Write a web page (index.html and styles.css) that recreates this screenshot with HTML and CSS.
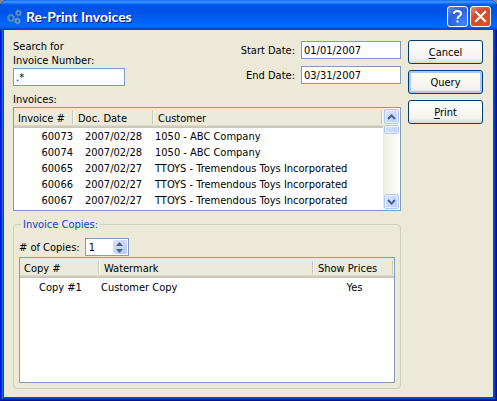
FILE: index.html
```html
<!DOCTYPE html>
<html lang="en">
<head>
<meta charset="utf-8">
<title>Re-Print Invoices</title>
<link rel="stylesheet" href="styles.css">
</head>
<body>
<div class="window">
  <header class="titlebar">
    <svg class="app-icon" viewBox="0 0 16 16" width="16" height="16" fill="none" aria-hidden="true">
      <circle cx="4" cy="9" r="2.700" stroke="#4f8fb8" stroke-width="1.600"/>
      <circle cx="4" cy="9" r="3.800" stroke="#4f8fb8" stroke-width="1" stroke-dasharray="1.500 1.484"/>
      <circle cx="11.500" cy="4" r="2" stroke="#5f97bd" stroke-width="1.500"/>
      <circle cx="11.500" cy="4" r="3" stroke="#5f97bd" stroke-width="1" stroke-dasharray="1.200 1.156"/>
      <circle cx="10.500" cy="12" r="1.900" stroke="#6c9cc4" stroke-width="1.500"/>
      <circle cx="10.500" cy="12" r="3" stroke="#6c9cc4" stroke-width="1" stroke-dasharray="1.200 1.156"/>
    </svg>
    <h1>Re-Print Invoices</h1>
    <button class="caption help" type="button" aria-label="Help">
      <svg viewBox="0 0 21 21" width="21" height="21" fill="none" aria-hidden="true">
        <path d="M7 8V7.500C7 5.500 8.500 5 10.500 5S14 5.800 14 7.700C14 10 10.500 10 10.500 13" stroke="#fff" stroke-width="2"/>
        <path d="M9.500 14.500h2v2h-2z" fill="#fff"/>
      </svg>
    </button>
    <button class="caption close" type="button" aria-label="Close">
      <svg viewBox="0 0 21 21" width="21" height="21" aria-hidden="true"><path d="M6 6l9 9M15 6l-9 9" stroke="#fff" stroke-width="2.200" stroke-linecap="square"/></svg>
    </button>
  </header>
  <main class="content">
    <div class="main-column">
      <div class="filters">
        <div class="search">
          <label for="search">Search for<br>Invoice Number:</label>
          <input id="search" class="field" type="text" value=".*">
        </div>
        <div class="dates">
          <label for="start">Start Date:</label>
          <input id="start" class="field" type="text" value="01/01/2007">
          <label for="end">End Date:</label>
          <input id="end" class="field" type="text" value="03/31/2007">
        </div>
      </div>
      <h2 id="invoices-label" class="list-label">Invoices:</h2>
      <div class="list invoice-list">
        <table class="grid invoices" aria-labelledby="invoices-label">
          <colgroup><col class="c-number"><col class="c-date"><col></colgroup>
          <thead><tr><th>Invoice #</th><th>Doc. Date</th><th>Customer</th></tr></thead>
          <tbody>
            <tr><td>60073</td><td>2007/02/28</td><td>1050 - ABC Company</td></tr>
            <tr><td>60074</td><td>2007/02/28</td><td>1050 - ABC Company</td></tr>
            <tr><td>60065</td><td>2007/02/27</td><td>TTOYS - Tremendous Toys Incorporated</td></tr>
            <tr><td>60066</td><td>2007/02/27</td><td>TTOYS - Tremendous Toys Incorporated</td></tr>
            <tr><td>60067</td><td>2007/02/27</td><td>TTOYS - Tremendous Toys Incorporated</td></tr>
          </tbody>
        </table>
        <div class="scrollbar">
          <button class="scroll-button" type="button" aria-label="Scroll up"><svg viewBox="0 0 9 6" width="9" height="6" fill="none" aria-hidden="true"><path d="M1 5l3.500-3.500L8 5" stroke="#4d6185" stroke-width="2"/></svg></button>
          <div class="thumb"></div>
          <button class="scroll-button down" type="button" aria-label="Scroll down"><svg viewBox="0 0 9 6" width="9" height="6" fill="none" aria-hidden="true"><path d="M1 1l3.500 3.500L8 1" stroke="#4d6185" stroke-width="2"/></svg></button>
        </div>
      </div>
      <fieldset class="copies">
        <legend>Invoice Copies:</legend>
        <div class="copy-count">
          <label for="copies"># of Copies:</label>
          <div class="spinner">
            <input id="copies" type="text" inputmode="numeric" value="1">
            <div class="steps">
              <button type="button" aria-label="More copies"><svg viewBox="0 0 7 4" width="7" height="4" aria-hidden="true"><path d="M0 4l3.500-4L7 4z" fill="#4d6185"/></svg></button>
              <button type="button" aria-label="Fewer copies"><svg viewBox="0 0 7 4" width="7" height="4" aria-hidden="true"><path d="M0 0l3.500 4L7 0z" fill="#4d6185"/></svg></button>
            </div>
          </div>
        </div>
        <div class="list copy-list">
          <table class="grid copy-grid">
            <colgroup><col class="c-copy"><col><col class="c-prices"></colgroup>
            <thead><tr><th>Copy #</th><th>Watermark</th><th>Show Prices</th></tr></thead>
            <tbody><tr><td>Copy #1</td><td>Customer Copy</td><td>Yes</td></tr></tbody>
          </table>
        </div>
      </fieldset>
    </div>
    <div class="actions">
      <button class="action" type="button"><u>C</u>ancel</button>
      <button class="action default" type="button">Query</button>
      <button class="action" type="button"><u>P</u>rint</button>
    </div>
  </main>
</div>
</body>
</html>
```
FILE: styles.css
```css
* { box-sizing: border-box; }

body {
  margin: 0;
  background: #8f8b7c;
  color: #000;
  font: 11px/15px Tahoma, "DejaVu Sans Condensed", "Noto Sans", sans-serif;
}

button, input { font: inherit; color: inherit; margin: 0; padding: 0; }
svg { display: block; }

.window {
  display: flex;
  flex-direction: column;
  min-height: 100vh;
  padding: 0 4px 4px;
  border-radius: 7px 7px 0 0;
  background: #0441dc;
  box-shadow: inset 1px 0 #0019cf, inset -1px -1px #00138c, inset 2px 0 #0831d9, inset -2px -2px #001ea0, inset 3px 0 #166aee;
}

.titlebar {
  display: flex;
  align-items: center;
  gap: 2px;
  height: 30px;
  margin: 0 -4px;
  padding: 3px 6px 0 7px;
  border-radius: 7px 7px 0 0;
  background: linear-gradient(#0058e6 0, #3a93ff 1px, #2a88ff 3px, #0464f0 4px, #0053e6 6px, #0055e8 14px, #0066ff 23px, #0066ff 27px, #0050ee 28px, #003dd7 30px);
}

.titlebar h1 {
  flex: 1;
  margin: 0 0 0 1px;
  color: #fff;
  font: bold 14px/18px "Trebuchet MS", Lato, "Open Sans", sans-serif;
  text-shadow: 1px 1px #0a1883;
}

.caption {
  width: 21px;
  height: 21px;
  border: 1px solid #fff;
  border-radius: 3px;
}
.caption svg { margin: -1px; }
.help { background: radial-gradient(circle at 80% 85%, #3f84ff, #2d5fdc 60%, #6d90ee); }
.close { background: radial-gradient(circle at 75% 80%, #e0501e, #d4492a 60%, #ea9480); }

.content {
  display: flex;
  flex: 1;
  gap: 7px;
  padding: 10px 10px 8px 9px;
  background: #ece9d8;
}

.main-column { display: flex; flex: 1; flex-direction: column; min-width: 0; }
.filters { display: flex; justify-content: space-between; }
.search { display: grid; gap: 0; width: 112px; }
.search label { height: 28px; line-height: 14px; }
.dates {
  display: grid;
  grid-template-columns: auto 100px;
  align-content: start;
  align-items: center;
  gap: 7px 6px;
  padding-top: 1px;
  text-align: right;
}

.field {
  width: 100%;
  height: 18px;
  padding: 0 2px;
  border: 1px solid #7f9db9;
  background: #fff;
}

.list-label { margin: 7px 0 0; font: inherit; line-height: 14px; }

.list {
  display: flex;
  align-items: stretch;
  border: 1px solid #7f9db9;
  background: #fff;
}

.grid {
  flex: 1;
  align-self: flex-start;
  min-width: 0;
  table-layout: fixed;
  border-collapse: collapse;
}
.grid th, .grid td { padding: 0; font-weight: normal; white-space: nowrap; }
.grid th {
  height: 20px;
  padding-left: 4px;
  text-align: left;
  background:
    linear-gradient(#c7c5b2, #c7c5b2) right 1px top 3px / 1px 13px no-repeat,
    linear-gradient(#fff, #fff) right 0 top 3px / 1px 13px no-repeat,
    linear-gradient(#ebeadb 17px, #e2decd 17px, #d6d2c2 18px, #cbc7b8 19px);
}
.grid td { height: 16px; }

.invoices { margin-bottom: 2px; }
.invoices tbody td { padding-left: 1px; }
.invoices td:nth-child(1) { padding-right: 1px; text-align: right; }
.invoices td:nth-child(2) { padding-right: 12px; text-align: right; }
.c-number { width: 60px; }
.c-date { width: 80px; }

.scrollbar {
  display: flex;
  flex-direction: column;
  width: 17px;
  padding: 1px;
  background: linear-gradient(90deg, #eeede5, #fefefb);
}
.scroll-button, .thumb {
  border: 1px solid #b4c8f6;
  border-radius: 2px;
  background: linear-gradient(135deg, #dce6ff, #b9cdfb);
  box-shadow: inset 0 0 0 1px #e8efff;
}
.scroll-button { display: grid; place-items: center; height: 15px; }
.thumb { height: 9px; margin-top: 1px; }
.down { margin-top: auto; }

.copies {
  display: flex;
  flex: 1;
  flex-direction: column;
  min-width: 0;
  margin: 6px 0 0;
  padding: 6px 5px 5px;
  border: 1px solid #d0d0bf;
  border-radius: 4px;
}
.copies legend { margin-left: 2px; padding: 0 2px; color: #0046d5; }
.copy-count { display: flex; align-items: center; gap: 5px; }
.spinner {
  display: flex;
  width: 44px;
  height: 18px;
  padding: 1px;
  border: 1px solid #7f9db9;
  background: #fff;
}
.spinner input { flex: 1; min-width: 0; padding-left: 2px; border: 0; background: none; }
.steps {
  display: flex;
  flex-direction: column;
  width: 14px;
  border-radius: 2px;
  background: linear-gradient(135deg, #d5e1ff, #b5c9f9);
}
.steps button { display: grid; flex: 1; place-items: center; border: 0; background: none; }

.copy-list { flex: 1; margin-top: 1px; }
.c-copy { width: 80px; }
.c-prices { width: 80px; }
.copy-grid tbody td { height: 18px; padding-left: 1px; }
.copy-grid td:nth-child(1) { text-align: center; }
.copy-grid td:nth-child(3) { text-align: center; }

.actions { display: flex; flex-direction: column; gap: 6px; width: 75px; }
.action {
  height: 24px;
  border: 1px solid #003c74;
  border-radius: 3px;
  background: linear-gradient(#fff, #f3f2ec 80%, #dcd7cb);
}
.action u { text-underline-offset: 2px; }
.default { box-shadow: inset 0 0 0 2px #adc6f2; }
```
